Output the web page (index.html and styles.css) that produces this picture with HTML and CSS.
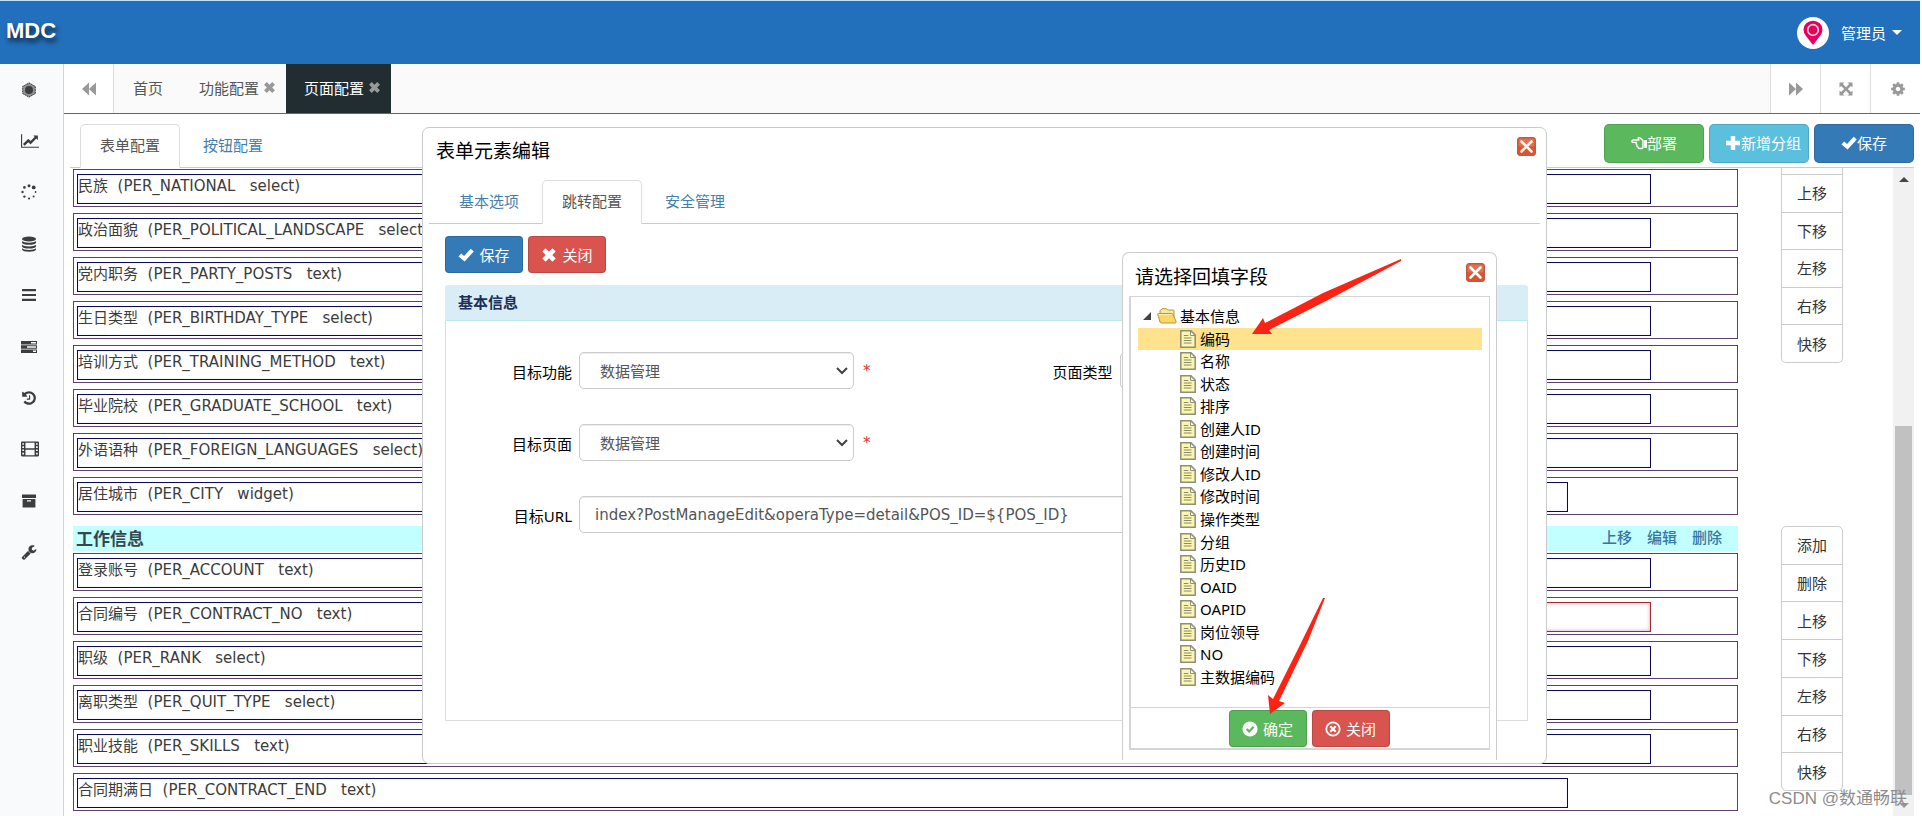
FILE: index.html
```html
<!DOCTYPE html>
<html lang="zh-CN">
<head>
<meta charset="utf-8">
<title>MDC</title>
<link rel="stylesheet" href="styles.css">
</head>
<body>
<svg class="sprite" aria-hidden="true">
  <symbol id="i-check" viewBox="0 0 16 16"><path d="M.5 9.400 3.200 6.600 6.100 9 12.700 1.800 15.800 4.500 6.600 14.400Z"/></symbol>
  <symbol id="i-times" viewBox="0 0 16 16"><path d="M1.300 4.600 4.600 1.300 8 4.700 11.400 1.300 14.700 4.600 11.300 8 14.700 11.400 11.400 14.700 8 11.300 4.600 14.700 1.300 11.400 4.700 8Z"/></symbol>
  <symbol id="i-plus" viewBox="0 0 16 16"><path d="M5.800 1h4.400v4.800H15v4.400h-4.800V15H5.800v-4.800H1V5.800h4.800z"/></symbol>
  <symbol id="i-hand" viewBox="0 0 16 16"><path fill="none" stroke="currentColor" stroke-width="1.400" stroke-linejoin="round" d="M12 12.500V5.500L9.500 3.200C8.500 2.200 7 2.500 7.300 3.700L8 5H2.200C.5 5 .5 7.400 2.200 7.400H5.500C4.800 8.400 5 9.500 6 9.800 5.600 10.800 6 11.700 7 11.900 7 13 7.600 13.500 8.700 13.500H11z"/><path d="M13.200 5H16v8h-2.800z"/></symbol>
  <symbol id="i-back" viewBox="0 0 16 16"><path d="M8 1.500V14.500L1 8zM15 1.500V14.500L8 8z"/></symbol>
  <symbol id="i-fwd" viewBox="0 0 16 16"><path d="M8 1.500V14.500L15 8zM1 1.500V14.500L8 8z"/></symbol>
  <symbol id="i-expand" viewBox="0 0 16 16"><path d="M1.500 1.500H6.500L4.900 3.100 8 6.200 11.100 3.100 9.500 1.500H14.500V6.500L12.900 4.900 9.800 8 12.900 11.100 14.500 9.500V14.500H9.500L11.100 12.900 8 9.800 4.900 12.900 6.500 14.500H1.500V9.500L3.100 11.100 6.200 8 3.100 4.900 1.500 6.500z"/></symbol>
  <symbol id="i-cog" viewBox="0 0 1792 1792"><path d="M1152 896q0-106-75-181t-181-75-181 75-75 181 75 181 181 75 181-75 75-181zm512-109v222q0 12-8 23t-20 13l-185 28q-19 54-39 91 35 50 107 138 10 12 10 25t-9 23q-27 37-99 108t-94 71q-12 0-26-9l-138-108q-44 23-91 38-16 136-29 186-7 28-36 28h-222q-14 0-24.500-8.500t-11.500-21.500l-28-184q-49-16-90-37l-141 107q-10 9-25 9-14 0-25-11-126-114-165-168-7-10-7-23 0-12 8-23 15-21 51-66.500t54-70.500q-27-50-41-99l-183-27q-13-2-21-12.500t-8-23.500v-222q0-12 8-23t19-13l186-28q14-46 39-92-40-57-107-138-10-12-10-24 0-10 9-23 26-36 98.500-107.500t94.500-71.500q13 0 26 10l138 107q44-23 91-38 16-136 29-186 7-28 36-28h222q14 0 24.500 8.500t11.500 21.500l28 184q49 16 90 37l142-107q9-9 24-9 13 0 25 10 129 119 165 170 7 8 7 22 0 12-8 23-15 21-51 66.500t-54 70.500q26 50 41 98l183 28q13 2 21 12.500t8 23.500z"/></symbol>
  <symbol id="i-hex" viewBox="0 0 16 16"><path opacity=".55" d="M8 .6 14.600 4.300v7.400L8 15.400 1.400 11.700V4.300z"/><path fill="none" stroke="currentColor" stroke-width="1" stroke-dasharray="1.500 1" d="M8 1 14.300 4.500v7L8 15 1.700 11.500v-7z"/><circle cx="8" cy="8" r="4"/></symbol>
  <symbol id="i-chart" viewBox="0 0 2048 1792"><path d="M2048 1536v128H0V128h128v1408h1920zM1920 288v435q0 21-19.500 29.500T1865 745l-121-121-633 633q-10 10-23 10t-23-10l-233-233-416 416-192-192 585-585q10-10 23-10t23 10l233 233 464-464-121-121q-16-16-7.500-35.500T1581 256h307q14 0 23 9t9 23z"/></symbol>
  <symbol id="i-spin" viewBox="0 0 16 16"><circle cx="8" cy="1.700" r="1.500"/><circle cx="12.700" cy="3.400" r="1.900"/><circle cx="14.600" cy="8" r=".9"/><circle cx="12.600" cy="12.600" r="1"/><circle cx="8" cy="14.500" r="1.100"/><circle cx="3.400" cy="12.600" r="1.200"/><circle cx="1.500" cy="8" r="1.200"/><circle cx="3.400" cy="3.400" r="1.300"/></symbol>
  <symbol id="i-db" viewBox="0 0 16 16"><ellipse cx="8" cy="3" rx="7" ry="2.600"/><path d="M1 5q2 1.700 7 1.700T15 5v1.700q-1 2-7 2T1 6.700zM1 8.700q2 1.700 7 1.700t7-1.700v1.700q-1 2-7 2t-7-2zM1 12.300Q3 14 8 14t7-1.700V13.500q-1 2.200-7 2.200T1 13.500z"/></symbol>
  <symbol id="i-bars" viewBox="0 0 16 16"><path d="M1 2h14v2.200H1zM1 6.900h14v2.200H1zM1 11.800h14V14H1z"/></symbol>
  <symbol id="i-tasks" viewBox="0 0 16 14"><path fill-rule="evenodd" d="M0 1h16v3.400H0zM10 2v1.400h5V2zM0 5.300h16v3.400H0zM6 6.300v1.400h9V6.300zM0 9.600h16V13H0zM12 10.600V12h3v-1.400z"/></symbol>
  <symbol id="i-history" viewBox="0 0 1792 1792"><path d="M1664 896q0 156-61 298t-164 245-245 164-298 61q-172 0-327-72.500t-264-204.500q-7-10-6.500-22.500t8.500-20.500l137-138q10-9 25-9 16 2 23 12 73 95 179 147t225 52q104 0 198.500-40.500t163.500-109.500 109.500-163.500 40.500-198.500-40.500-198.500-109.500-163.500-163.500-109.500-198.500-40.500q-98 0-188 35.500t-160 101.500l137 138q31 30 14 69-17 40-59 40h-448q-26 0-45-19t-19-45v-448q0-42 40-59 39-17 69 14l130 129q107-101 244.500-156.500t284.500-55.500q156 0 298 61t245 164 164 245 61 298zm-640-288v448q0 14-9 23t-23 9h-320q-14 0-23-9t-9-23v-64q0-14 9-23t23-9h224v-352q0-14 9-23t23-9h64q14 0 23 9t9 23z"/></symbol>
  <symbol id="i-film" viewBox="0 0 17 15"><path fill-rule="evenodd" d="M1 .5h15q1 0 1 1v12q0 1-1 1H1q-1 0-1-1v-12q0-1 1-1zM1.200 2v1.500h1.600V2zm0 3v1.500h1.600V5zm0 3v1.500h1.600V8zm0 3v1.800h1.600V11zM14.200 2v1.500h1.600V2zm0 3v1.500h1.600V5zm0 3v1.500h1.600V8zm0 3v1.800h1.600V11zM4.200 1.700v5.200h8.600V1.700zm0 6.400v5.200h8.600V8.100z"/></symbol>
  <symbol id="i-archive" viewBox="0 0 16 16"><path fill-rule="evenodd" d="M1 1.500h14V5H1zM1.600 6h12.800v8.500H1.600zM6 7.200v1.200h4V7.200z"/></symbol>
  <symbol id="i-wrench" viewBox="0 0 1792 1792"><path d="M448 1472q0-26-19-45t-45-19-45 19-19 45 19 45 45 19 45-19 19-45zm644-420l-682 682q-37 37-90 37-52 0-91-37l-106-108q-38-36-38-90 0-53 38-91l681-681q39 98 114.500 173.500t173.500 114.500zm634-435q0 39-23 106-47 134-164.500 217.500t-258.500 83.500q-185 0-316.500-131.500t-131.500-316.500 131.500-316.500 316.500-131.500q58 0 121.500 16.500t107.500 46.500q16 11 16 28t-16 28l-293 169v224l193 107q5-3 79-48.500t135.500-81 70.500-35.500q15 0 23.500 10t8.500 25z"/></symbol>
  <symbol id="i-okc" viewBox="0 0 16 16"><circle cx="8" cy="8" r="7.600"/><path fill="none" stroke="#5cb85c" stroke-width="2.200" d="M4.600 8 7.200 10.400 11.600 5.700"/></symbol>
  <symbol id="i-noc" viewBox="0 0 16 16"><circle cx="8" cy="8" r="6.700" fill="none" stroke="currentColor" stroke-width="1.800"/><path fill="none" stroke="currentColor" stroke-width="2.200" d="M5.300 5.300 10.700 10.700M10.700 5.300 5.300 10.700"/></symbol>
  <symbol id="i-close" viewBox="0 0 19 19"><rect x=".5" y=".5" width="18" height="18" rx="2.500" fill="#d9532f" stroke="#c0584a"/><rect x="1.500" y="1.500" width="16" height="8" rx="1.500" fill="#e28468" opacity=".6"/><path fill="none" stroke="#fff" stroke-width="2.600" stroke-linecap="round" d="M4.500 4.500l10 10M14.500 4.500l-10 10"/></symbol>
  <symbol id="i-folder" viewBox="0 0 20 16"><path fill="#f9e9a0" stroke="#b8953c" d="M3 14V3q0-1 1-1l1-1.300h4.500L10.500 2H16q1 0 1 1v10z"/><path fill="#f6d768" stroke="#b8953c" d="M.6 6.500q0-1 1-1h13q1 0 1.300.8l3.200 7.200q.4 1.500-1 1.500H4.500q-1 0-1.300-.8z"/><path stroke="#fdf2b8" fill="none" d="M2 6.600h12.500"/></symbol>
  <symbol id="i-file" viewBox="0 0 16 18"><path fill="#fbf6b0" stroke="#8f8f78" stroke-width="1.500" d="M.8.8H11l4.200 4.200v12.200H.8z"/><path fill="#fff" stroke="#8f8f78" d="M10.500 1v4.500H15z"/><path stroke="#8a8a6c" fill="none" d="M3.800 5.500h4.500M3.800 8h7.700M3.800 10.500h7.700M3.800 13h7.700"/></symbol>
</svg>

<div class="app">
  <header class="header">
    <a class="brand" href="#">MDC</a>
    <button class="user" type="button">
      <svg class="avatar" viewBox="0 0 32 32"><circle cx="16" cy="16" r="16" fill="#fff"/><path fill="#e5005b" d="M16 28 9 19Q6.500 16 6.500 12.500a9.500 8.800 0 0 1 19 0Q25.500 16 23 19z"/><circle cx="16" cy="13" r="5.300" fill="#e5005b" stroke="#fbd5e3" stroke-width="1.700"/></svg>
      <span>管理员</span><span class="caret"></span>
    </button>
  </header>

  <div class="shell">
    <nav class="sidebar">
      <a href="#" aria-label="总览"><svg><use href="#i-hex"/></svg></a>
      <a href="#" aria-label="图表"><svg class="wide"><use href="#i-chart"/></svg></a>
      <a href="#" aria-label="进度"><svg><use href="#i-spin"/></svg></a>
      <a href="#" aria-label="数据"><svg><use href="#i-db"/></svg></a>
      <a href="#" aria-label="列表"><svg><use href="#i-bars"/></svg></a>
      <a href="#" aria-label="任务"><svg><use href="#i-tasks"/></svg></a>
      <a href="#" aria-label="历史"><svg><use href="#i-history"/></svg></a>
      <a href="#" aria-label="媒体"><svg class="wide"><use href="#i-film"/></svg></a>
      <a href="#" aria-label="归档"><svg><use href="#i-archive"/></svg></a>
      <a href="#" aria-label="工具"><svg><use href="#i-wrench"/></svg></a>
    </nav>

    <main class="main">
      <div class="tabbar">
        <button class="tool first" type="button" aria-label="向左"><svg><use href="#i-back"/></svg></button>
        <a class="page-tab" href="#">首页</a>
        <a class="page-tab closable" href="#">功能配置<svg><use href="#i-times"/></svg></a>
        <a class="page-tab closable current" href="#">页面配置<svg><use href="#i-times"/></svg></a>
        <span class="spacer"></span>
        <button class="tool" type="button" aria-label="向右"><svg><use href="#i-fwd"/></svg></button>
        <button class="tool" type="button" aria-label="全屏"><svg><use href="#i-expand"/></svg></button>
        <button class="tool last" type="button" aria-label="设置"><svg><use href="#i-cog"/></svg></button>
      </div>

      <div class="content">
        <div class="subbar">
          <div class="tabs">
            <a class="tab active" href="#">表单配置</a>
            <a class="tab" href="#">按钮配置</a>
          </div>
          <div class="actions">
            <button class="act green" type="button"><svg><use href="#i-hand"/></svg>部署</button>
            <button class="act cyan" type="button"><svg><use href="#i-plus"/></svg>新增分组</button>
            <button class="act blue" type="button"><svg><use href="#i-check"/></svg>保存</button>
          </div>
        </div>

        <div class="scroller">
          <div class="sections">
            <section class="section">
              <div class="rows">
                <div class="row"><div class="field">民族&nbsp; (PER_NATIONAL&nbsp; &nbsp;select)</div></div>
                <div class="row"><div class="field">政治面貌&nbsp; (PER_POLITICAL_LANDSCAPE&nbsp; &nbsp;select)</div></div>
                <div class="row"><div class="field">党内职务&nbsp; (PER_PARTY_POSTS&nbsp; &nbsp;text)</div></div>
                <div class="row"><div class="field">生日类型&nbsp; (PER_BIRTHDAY_TYPE&nbsp; &nbsp;select)</div></div>
                <div class="row"><div class="field">培训方式&nbsp; (PER_TRAINING_METHOD&nbsp; &nbsp;text)</div></div>
                <div class="row"><div class="field">毕业院校&nbsp; (PER_GRADUATE_SCHOOL&nbsp; &nbsp;text)</div></div>
                <div class="row"><div class="field">外语语种&nbsp; (PER_FOREIGN_LANGUAGES&nbsp; &nbsp;select)</div></div>
                <div class="row"><div class="field short">居住城市&nbsp; (PER_CITY&nbsp; &nbsp;widget)</div></div>
              </div>
              <div class="side scrolled">
                <button type="button">上移</button><button type="button">下移</button><button type="button">左移</button><button type="button">右移</button><button type="button">快移</button>
              </div>
            </section>
            <section class="section">
              <div class="rows">
                <div class="group-head">
                  <h2>工作信息</h2>
                  <div class="links"><a href="#">上移</a><a href="#">编辑</a><a href="#">删除</a></div>
                </div>
                <div class="row"><div class="field">登录账号&nbsp; (PER_ACCOUNT&nbsp; &nbsp;text)</div></div>
                <div class="row"><div class="field required">合同编号&nbsp; (PER_CONTRACT_NO&nbsp; &nbsp;text)</div></div>
                <div class="row"><div class="field">职级&nbsp; (PER_RANK&nbsp; &nbsp;select)</div></div>
                <div class="row"><div class="field">离职类型&nbsp; (PER_QUIT_TYPE&nbsp; &nbsp;select)</div></div>
                <div class="row"><div class="field">职业技能&nbsp; (PER_SKILLS&nbsp; &nbsp;text)</div></div>
                <div class="row"><div class="field short">合同期满日&nbsp; (PER_CONTRACT_END&nbsp; &nbsp;text)</div></div>
              </div>
              <div class="side">
                <button type="button">添加</button><button type="button">删除</button><button type="button">上移</button><button type="button">下移</button><button type="button">左移</button><button type="button">右移</button><button type="button">快移</button>
              </div>
            </section>
          </div>
          <div class="scrollbar" aria-hidden="true"><span class="up"></span><span class="thumb"></span><span class="down"></span></div>
        </div>
      </div>
    </main>
  </div>

  <div class="dialog" role="dialog" aria-labelledby="dlg-title">
    <div class="dialog-head">
      <h1 id="dlg-title">表单元素编辑</h1>
      <button class="close" type="button" aria-label="关闭窗口"><svg><use href="#i-close"/></svg></button>
    </div>
    <div class="tabs dialog-tabs">
      <a class="tab" href="#">基本选项</a>
      <a class="tab active" href="#">跳转配置</a>
      <a class="tab" href="#">安全管理</a>
    </div>
    <div class="dialog-body">
      <div class="buttons">
        <button class="btn blue" type="button"><svg><use href="#i-check"/></svg>保存</button>
        <button class="btn red" type="button"><svg><use href="#i-times"/></svg>关闭</button>
      </div>
      <div class="panel">
        <h2>基本信息</h2>
        <form class="form">
          <div class="item"><label for="func">目标功能</label><select id="func"><option>数据管理</option></select><span class="star">*</span></div>
          <div class="item"><label for="ptype">页面类型</label><select id="ptype"><option></option></select></div>
          <div class="item full"><label for="page">目标页面</label><select id="page"><option>数据管理</option></select><span class="star">*</span></div>
          <div class="item full"><label for="url">目标URL</label><input id="url" type="text" value="index?PostManageEdit&amp;operaType=detail&amp;POS_ID=${POS_ID}"></div>
        </form>
      </div>
    </div>

    <div class="picker" role="dialog" aria-labelledby="pick-title">
      <div class="dialog-head">
        <h1 id="pick-title">请选择回填字段</h1>
        <button class="close" type="button" aria-label="关闭选择"><svg><use href="#i-close"/></svg></button>
      </div>
      <div class="picker-box">
        <ul class="tree">
          <li class="root"><span class="twist"></span><svg><use href="#i-folder"/></svg>基本信息</li>
          <li class="selected"><svg><use href="#i-file"/></svg>编码</li>
          <li><svg><use href="#i-file"/></svg>名称</li>
          <li><svg><use href="#i-file"/></svg>状态</li>
          <li><svg><use href="#i-file"/></svg>排序</li>
          <li><svg><use href="#i-file"/></svg>创建人ID</li>
          <li><svg><use href="#i-file"/></svg>创建时间</li>
          <li><svg><use href="#i-file"/></svg>修改人ID</li>
          <li><svg><use href="#i-file"/></svg>修改时间</li>
          <li><svg><use href="#i-file"/></svg>操作类型</li>
          <li><svg><use href="#i-file"/></svg>分组</li>
          <li><svg><use href="#i-file"/></svg>历史ID</li>
          <li><svg><use href="#i-file"/></svg>OAID</li>
          <li><svg><use href="#i-file"/></svg>OAPID</li>
          <li><svg><use href="#i-file"/></svg>岗位领导</li>
          <li><svg><use href="#i-file"/></svg>NO</li>
          <li><svg><use href="#i-file"/></svg>主数据编码</li>
        </ul>
        <div class="buttons picker-foot">
          <button class="btn green" type="button"><svg><use href="#i-okc"/></svg>确定</button>
          <button class="btn red" type="button"><svg><use href="#i-noc"/></svg>关闭</button>
        </div>
      </div>
      <svg class="arrows" viewBox="0 0 374 508" aria-hidden="true">
        <path d="M278 6 200 40 142 70 140 65 129 81 149 81 146 77 205 47 278 8Z"/>
        <path d="M200 345 176 394 150 446 145 442 147 461 162 450 156 448 185 388 202 345Z"/>
      </svg>
    </div>
  </div>

  <div class="watermark">CSDN @数通畅联</div>
</div>
</body>
</html>
```
FILE: styles.css
```css
* { box-sizing: border-box; }

body {
  margin: 0;
  background: #fff;
  color: #3c3c3c;
  font-family: "Noto Sans", "Noto Sans CJK SC", sans-serif;
  font-size: 15px;
  line-height: 22px;
}

button, input, select { font: inherit; color: inherit; }
button { padding: 0; border: 0; background: none; }
a { color: inherit; text-decoration: none; }
h1, h2 { margin: 0; font-weight: 400; }
svg { width: 16px; height: 16px; fill: currentColor; flex: none; display: block; }
.sprite { position: absolute; width: 0; height: 0; }

.app {
  position: relative;
  display: flex;
  flex-direction: column;
  height: 100vh;
  margin-right: 2px;
  overflow: hidden;
}

/* header */
.header {
  display: flex;
  justify-content: space-between;
  align-items: center;
  flex: none;
  height: 64px;
  padding: 0 18px 0 6px;
  border-top: 1px solid #bfe3f7;
  background: #2270bb;
  color: #fff;
}
.brand {
  padding-bottom: 3px;
  font: bold 22px/32px "Liberation Sans", sans-serif;
  text-shadow: 2px 4px 5px rgba(0, 0, 0, .7);
}
.user { display: flex; align-items: center; }
.avatar { width: 32px; height: 32px; margin-right: 12px; }
.caret {
  margin-left: 6px;
  border: 5px solid transparent;
  border-top-color: #fff;
  border-bottom: 0;
}

.shell { display: flex; flex: 1; min-height: 0; }
.sidebar {
  display: grid;
  grid-template-rows: repeat(10, 1fr);
  width: 64px;
  flex: none;
  padding-bottom: 238px;
  border-right: 1px solid #cfd6de;
  background: #f9fafc;
  color: #3d3d3d;
}
.sidebar a { display: flex; align-items: center; padding-left: 21px; }
.sidebar .wide { width: 18px; }

.main { display: flex; flex-direction: column; flex: 1; min-width: 0; }

/* page tabs */
.tabbar {
  display: flex;
  flex: none;
  height: 50px;
  border-bottom: 1px solid #3f7192;
  background: #fafafa;
  color: #555;
}
.tool {
  display: flex;
  align-items: center;
  justify-content: center;
  width: 50px;
  border-left: 1px solid #ddd;
  background: #fff;
  color: #999;
}
.tool.first { border-left: 0; border-right: 1px solid #ddd; }
.tool.last { padding-left: 4px; }
.page-tab { display: flex; align-items: center; padding: 0 18px 2px 19px; }
.page-tab.closable { padding: 0 10px 2px 18px; }
.page-tab svg { width: 13px; height: 13px; margin-left: 4px; color: #999; }
.page-tab.current { background: #222d32; color: #fff; }
.spacer { flex: 1; }

/* content */
.content { display: flex; flex-direction: column; flex: 1; min-height: 0; padding: 10px 6px 0; }
.subbar {
  display: flex;
  justify-content: space-between;
  flex: none;
  height: 44px;
  border-bottom: 1px solid #cfc8d4;
  padding-left: 10px;
}
.tabs { display: flex; }
.tab { height: 44px; padding: 9px 19px; border: 1px solid transparent; color: #437fab; margin-right: 3px; }
.tab.active { border-color: #ddd; border-bottom-color: #fff; border-radius: 5px 5px 0 0; background: #fff; color: #555; }
.actions { display: flex; gap: 5px; }
.act {
  display: flex;
  align-items: center;
  justify-content: center;
  width: 100px;
  height: 39px;
  padding-bottom: 1px;
  border: 1px solid rgba(0, 0, 0, .12);
  border-radius: 5px;
  color: #fff;
}
.act.cyan { justify-content: flex-end; padding-right: 7px; }
.green { background: #5cb85c; }
.cyan { background: #5bc0de; }
.blue { background: #337ab7; }
.red { background: #d9534f; }

.scroller { display: flex; flex: 1; min-height: 0; overflow: hidden; }
.sections { flex: 1; min-width: 0; padding: 1px 50px 0 3px; }
.section { display: flex; align-items: flex-start; gap: 43px; margin-bottom: 11px; }
.rows { display: flex; flex-direction: column; flex: 1; gap: 6px; min-width: 0; }
.row { height: 38px; padding: 4px 3px 2px; border: 1px solid #5b4070; }
.field {
  width: 95%;
  height: 30px;
  border: 1px solid #0b0b55;
  font-family: "DejaVu Sans", "Noto Sans CJK SC", sans-serif;
  line-height: 23px;
  white-space: nowrap;
  box-shadow: inset 0 0 2px #dcdcf5;
}
.field.short { width: 90%; }
.field.required { position: relative; }
.field.required::after {
  content: "";
  position: absolute;
  inset: -1px -1px -1px 50%;
  border: 1px solid #9c2b35;
  box-shadow: inset 0 0 4px #f3a9ae;
}
.group-head {
  display: flex;
  justify-content: space-between;
  height: 25px;
  margin-bottom: -4px;
  padding: 0 16px 0 3px;
  background: #c2ffff;
}
.group-head h2 { font-size: 17px; font-weight: 700; line-height: 26px; color: #35474d; }
.links { display: flex; gap: 15px; color: #3775a5; font-weight: 500; }
.side {
  display: flex;
  flex-direction: column;
  width: 62px;
  height: 265px;
  border: 1px solid #ccc;
  border-radius: 5px;
  background: #fff;
}
.side button { flex: 1; color: #333; }
.side button + button, .side.scrolled button { border-top: 1px solid #ccc; }
.side.scrolled {
  height: 195px;
  margin-top: -1px;
  padding-top: 6px;
  border-top: 0;
  border-radius: 0 0 5px 5px;
}

.scrollbar {
  display: flex;
  flex-direction: column;
  align-items: center;
  width: 21px;
  padding: 9px 0 8px;
  background: #f1f1f1;
}
.up { border: 5px solid transparent; border-bottom-color: #444; border-top: 0; }
.down { border: 5px solid transparent; border-top-color: #999; border-bottom: 0; }
.thumb { width: 17px; flex: 1; margin: 244px 0 8px; background: #c1c1c1; }

/* dialogs */
.dialog {
  position: absolute;
  top: 127px;
  left: 422px;
  right: 373px;
  border: 1px solid #c9c9d0;
  border-radius: 7px;
  background: #fff;
}
.dialog-head { display: flex; justify-content: space-between; height: 52px; padding: 9px 10px 0 13px; }
.dialog-head h1 { font-size: 19px; line-height: 28px; color: #000; }
.close { display: block; height: 19px; }
.close svg { width: 19px; height: 19px; }
.dialog-tabs { height: 44px; margin: 0 6px; padding-left: 10px; border-bottom: 1px solid #ccc; }
.dialog-body { padding: 12px 18px 42px 22px; }
.buttons { display: flex; gap: 5px; }
.btn {
  display: flex;
  align-items: center;
  justify-content: center;
  gap: 5px;
  width: 78px;
  height: 37px;
  border: 1px solid rgba(0, 0, 0, .14);
  border-radius: 4px;
  color: #fff;
}
.panel {
  min-height: 436px;
  margin-top: 12px;
  border: 1px solid #ddd;
  border-top: 0;
  border-radius: 4px 4px 0 0;
}
.panel h2 {
  height: 36px;
  margin: 0 -1px;
  padding: 0 13px;
  border-bottom: 1px solid #bce8f1;
  border-radius: 4px 4px 0 0;
  background: #d9edf7;
  color: #1b3058;
  font-size: 15px;
  font-weight: 700;
  line-height: 35px;
}
.form { display: grid; grid-template-columns: 1fr 1fr; row-gap: 35px; padding-top: 31px; }
.item { display: flex; align-items: center; gap: 7px; color: #000; }
.item.full { grid-column: 1 / -1; }
.item label { width: 126px; padding-top: 2px; text-align: right; }
.item select, .item input {
  width: 275px;
  height: 37px;
  padding: 0 0 0 20px;
  border: 1px solid #ccc;
  border-radius: 5px;
  background: #fff;
  color: #555;
  box-shadow: inset 0 1px 1px rgba(0, 0, 0, .075);
}
.item select {
  appearance: none;
  background: #fff url("data:image/svg+xml,%3Csvg xmlns='http://www.w3.org/2000/svg' width='12' height='8'%3E%3Cpath d='M1 1l5 5 5-5' fill='none' stroke='%23444' stroke-width='2'/%3E%3C/svg%3E") no-repeat right 5px center;
}
.item input { width: 815px; padding: 0 15px; font-family: "DejaVu Sans", "Noto Sans CJK SC", sans-serif; }
.star { padding-left: 2px; font-family: "DejaVu Sans", sans-serif; color: #e0353a; }

.picker {
  position: absolute;
  top: 124px;
  right: 49px;
  width: 375px;
  padding: 0 6px 10px;
  border: 1px solid #ccc;
  border-bottom: 0;
  border-radius: 7px 7px 0 0;
  background: #fff;
}
.picker .dialog-head { height: 43px; padding: 10px 5px 0 6px; }
.picker-box { border: 1px solid #d5d5d5; border-width: 1px 1px 2px 2px; }
.tree {
  display: grid;
  grid-template-rows: repeat(17, 1fr);
  height: 410px;
  margin: 0;
  padding: 8px 7px 19px;
  list-style: none;
  color: #000;
}
.tree li { display: flex; align-items: center; gap: 4px; min-height: 0; padding-left: 42px; }
.tree li svg { height: 18px; }
.tree .root { gap: 3px; padding-left: 5px; }
.tree .root svg { width: 20px; height: 16px; }
.tree .selected { background: #ffe28d; }
.twist { margin-right: 3px; border: 4px solid #444; border-top-color: transparent; border-left-color: transparent; }
.picker-foot { justify-content: center; padding: 2px 2px 1px 0; border-top: 1px solid #d5d5d5; }
.arrows {
  position: absolute;
  inset: 0;
  width: 374px;
  height: 508px;
  fill: #fb2414;
  pointer-events: none;
}

.watermark {
  position: absolute;
  right: 13px;
  bottom: 4px;
  color: #8c8c8c;
  font-family: "Liberation Sans", "Noto Sans CJK SC", sans-serif;
  font-size: 17px;
  line-height: 26px;
}
```
